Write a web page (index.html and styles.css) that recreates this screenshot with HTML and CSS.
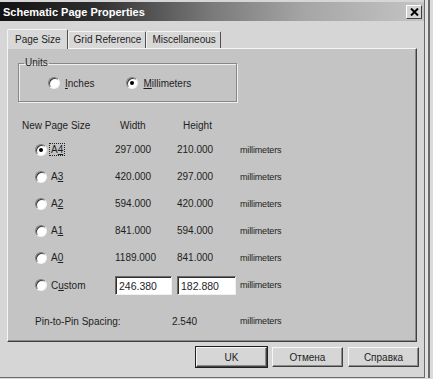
FILE: index.html
```html
<!DOCTYPE html>
<html>
<head>
<meta charset="utf-8">
<link rel="stylesheet" href="styles.css">
</head>
<body>
<div class="frame">
  <div class="window">
    <div class="titlebar">
      <span class="title">Schematic Page Properties</span>
      <span class="close"><svg width="9" height="8" viewBox="0 0 9 8"><path d="M1 0.5 L8 7.5 M8 0.5 L1 7.5" stroke="#000" stroke-width="2"/></svg></span>
    </div>
    <div class="body">
      <div class="tabs">
        <div class="tab active">Page Size</div>
        <div class="tab">Grid Reference</div>
        <div class="tab">Miscellaneous</div>
      </div>
      <div class="panel">
        <fieldset class="units">
          <legend>Units</legend>
          <div class="units-row">
            <span class="opt opt-in"><span class="radio"></span><span><u>I</u>nches</span></span>
            <span class="opt opt-mm"><span class="radio on"></span><span><u>M</u>illimeters</span></span>
          </div>
        </fieldset>
        <div class="grid">
          <div class="cell hdr1">New Page Size</div>
          <div class="cell hdr2">Width</div>
          <div class="cell hdr3">Height</div>
          <div class="cell"></div>

          <div class="cell sel"><span class="radio on"></span><span class="focus">A<u>4</u></span></div>
          <div class="cell">297.000</div>
          <div class="cell">210.000</div>
          <div class="cell mm">millimeters</div>

          <div class="cell sel"><span class="radio"></span><span class="lbl">A<u>3</u></span></div>
          <div class="cell">420.000</div>
          <div class="cell">297.000</div>
          <div class="cell mm">millimeters</div>

          <div class="cell sel"><span class="radio"></span><span class="lbl">A<u>2</u></span></div>
          <div class="cell">594.000</div>
          <div class="cell">420.000</div>
          <div class="cell mm">millimeters</div>

          <div class="cell sel"><span class="radio"></span><span class="lbl">A<u>1</u></span></div>
          <div class="cell">841.000</div>
          <div class="cell">594.000</div>
          <div class="cell mm">millimeters</div>

          <div class="cell sel"><span class="radio"></span><span class="lbl">A<u>0</u></span></div>
          <div class="cell">1189.000</div>
          <div class="cell">841.000</div>
          <div class="cell mm">millimeters</div>

          <div class="cell sel"><span class="radio"></span><span class="lbl">C<u>u</u>stom</span></div>
          <div class="cell"><span class="input w1">246.380</span></div>
          <div class="cell"><span class="input w2">182.880</span></div>
          <div class="cell mm">millimeters</div>

          <div class="cell pin pin-label">Pin-to-Pin Spacing:</div>
          <div class="cell pin pin-val">2.540</div>
          <div class="cell pin mm">millimeters</div>
        </div>
      </div>
      <div class="buttons">
        <div class="btn default">UK</div>
        <div class="btn">Отмена</div>
        <div class="btn">Справка</div>
      </div>
    </div>
  </div>
</div>
</body>
</html>
```

FILE: styles.css
```css
html, body {
  margin: 0;
  padding: 0;
  background: #d8d8d8;
}
body {
  font-family: "Liberation Sans", Arial, sans-serif;
  font-size: 10px;
  color: #1e1e1e;
}
.frame {
  width: 433px;
  height: 379px;
  display: flex;
  background: #dadada;
}
.window {
  width: 424px;
  height: 377px;
  border-right: 1px solid #6a6a6a;
  box-shadow: 3px 0 0 #e2e2e2, 5px 0 0 #6a6a6a;
  border-bottom: 1px solid #6a6a6a;
  background: #d6d6d6;
  display: flex;
  flex-direction: column;
}
.titlebar {
  height: 19px;
  margin-top: 2px;
  background: linear-gradient(90deg, #121212 0%, #2e2e2e 22%, #7a7a7a 50%, #a6a6a6 72%, #c4c4c4 100%);
  display: flex;
  align-items: center;
  justify-content: space-between;
  padding-left: 3px;
  padding-right: 2px;
}
.title {
  color: #fff;
  font-family: "Liberation Sans", Arial, sans-serif;
  font-weight: bold;
  font-size: 11px;
}
.close {
  width: 14px;
  height: 12px;
  background: #d4d4d4;
  border: 1px solid;
  border-color: #fff #404040 #404040 #fff;
  display: flex;
  align-items: center;
  justify-content: center;
}
.body {
  flex: 1;
  padding: 7px 0 0 7px;
  display: flex;
  flex-direction: column;
}
.tabs {
  display: flex;
  align-items: flex-end;
  height: 20px;
}
.tab {
  height: 16px;
  line-height: 16px;
  padding: 0 4px 0 5px;
  background: #d8d8d8;
  border-top: 1px solid #f4f4f4;
  border-left: 1px solid #f4f4f4;
  border-right: 1px solid #505050;
  border-radius: 2px 2px 0 0;
}
.tab.active {
  height: 19px;
  line-height: 19px;
  padding: 0 6px 0 7px;
  margin-bottom: -1px;
  position: relative;
  z-index: 1;
}
.panel {
  width: 408px;
  height: 292px;
  background: #c4c4c4;
  border: 1px solid;
  border-color: #f6f6f6 #404040 #404040 #f6f6f6;
  box-shadow: inset -1px -1px 0 #8a8a8a;
  display: flex;
  flex-direction: column;
}
.units {
  margin: 8px 0 0 10px;
  padding: 0;
  width: 219px;
  height: 45px;
  box-sizing: border-box;
  border: 1px solid #888;
  box-shadow: 1px 1px 0 #f0f0f0, inset 1px 1px 0 #f0f0f0;
}
.units legend {
  margin-left: 5px;
  padding: 0 1px;
  line-height: 12px;
}
.units-row {
  display: flex;
  align-items: center;
  height: 22px;
  margin-top: 3px;
}
.opt {
  display: flex;
  align-items: center;
  gap: 5px;
}
.opt-in { margin-left: 29px; }
.opt-mm { margin-left: 32px; }
.radio {
  width: 12px;
  height: 12px;
  box-sizing: border-box;
  border-radius: 50%;
  background: #fff;
  border: 1px solid;
  border-color: #7c7c7c #f2f2f2 #f2f2f2 #7c7c7c;
  box-shadow: inset 1px 1px 0 #3a3a3a;
  display: flex;
  align-items: center;
  justify-content: center;
  flex: none;
}
.radio.on::after {
  content: "";
  width: 4px;
  height: 4px;
  border-radius: 50%;
  background: #000;
}
.grid {
  margin: 13px 0 0 14px;
  display: grid;
  grid-template-columns: 93px 62px 63px 100px;
  grid-template-rows: 21px repeat(5, 27px) 28px 36px;
}
.cell {
  display: flex;
  align-items: center;
  white-space: nowrap;
}
.hdr2 { padding-left: 5px; }
.hdr3 { padding-left: 6px; }
.sel { padding-left: 13px; gap: 3px; }
.sel .lbl { padding: 1px; }
.focus {
  padding: 0 1px;
  outline: 1px dotted #222;
}
.mm {
  font-size: 9px;
  letter-spacing: -0.15px;
}
.input {
  display: block;
  height: 19px;
  line-height: 18px;
  box-sizing: border-box;
  background: #fff;
  border: 1px solid;
  border-color: #6a6a6a #f0f0f0 #f0f0f0 #6a6a6a;
  box-shadow: inset 1px 1px 0 #303030;
  padding-left: 3px;
  font-size: 10.5px;
}
.w1 { width: 57px; }
.w2 { width: 59px; margin-left: 0; }
.pin { padding-top: 8px; }
.pin-label {
  grid-column: 1 / 3;
  padding-left: 13px;
}
.pin-val { margin-left: -5px; }
.buttons {
  display: flex;
  justify-content: flex-end;
  gap: 5px;
  margin-top: 5px;
  padding-right: 5px;
}
.btn {
  width: 71px;
  height: 20px;
  box-sizing: border-box;
  background: #d6d6d6;
  border: 1px solid;
  border-color: #f6f6f6 #404040 #404040 #f6f6f6;
  box-shadow: inset -1px -1px 0 #8a8a8a;
  display: flex;
  align-items: center;
  justify-content: center;
}
.btn.default {
  outline: 1px solid #202020;
}
```
